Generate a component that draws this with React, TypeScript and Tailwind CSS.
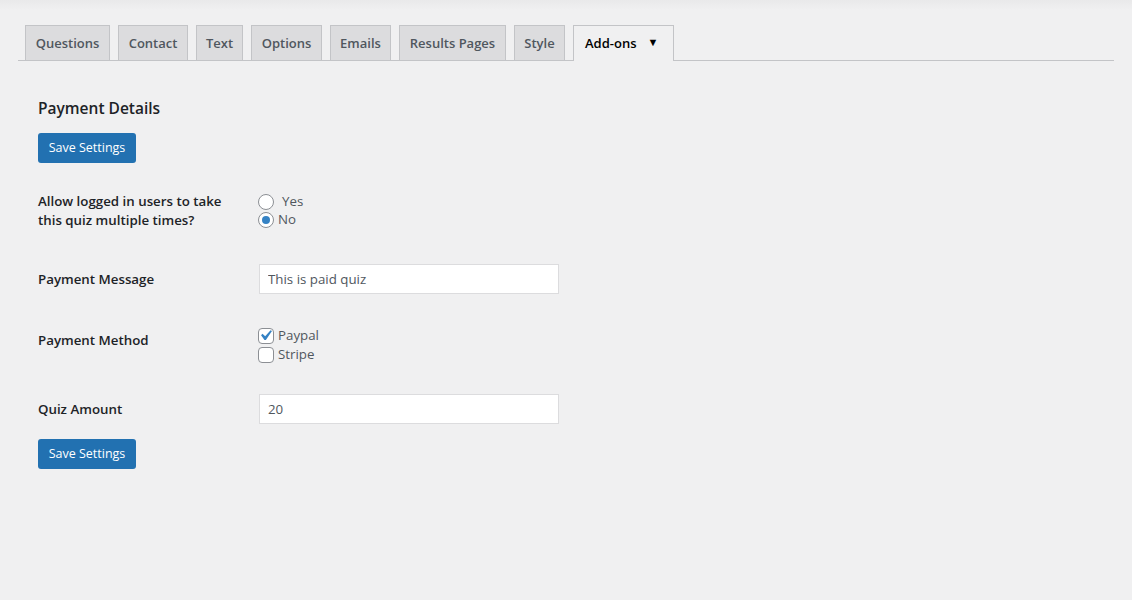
import { useState } from "react";

const tabs = [
  { label: "Questions", w: "w-[85px]" },
  { label: "Contact", w: "w-[70px]" },
  { label: "Text", w: "w-[47px]" },
  { label: "Options", w: "w-[71px]" },
  { label: "Emails", w: "w-[61px]" },
  { label: "Results Pages", w: "w-[107px]" },
  { label: "Style", w: "w-[51px]" },
];

function Radio({ checked, label, onClick }: { checked: boolean; label: string; onClick: () => void }) {
  return (
    <label onClick={onClick} className="flex items-center h-[18px] cursor-pointer">
      <span className="w-4 h-4 rounded-full border border-[#8c8f94] bg-white flex items-center justify-center">
        {checked && <span className="w-2 h-2 rounded-full bg-[#3582c4]" />}
      </span>
      <span className={checked ? "ml-[4px] text-[#50575e]" : "ml-[8px] text-[#50575e]"}>{label}</span>
    </label>
  );
}

function Check({ checked, label, onClick }: { checked: boolean; label: string; onClick: () => void }) {
  return (
    <label onClick={onClick} className="flex items-center h-[19px] cursor-pointer">
      <span className="relative w-4 h-4 rounded-[4px] border border-[#8c8f94] bg-white">
        {checked && (
          <svg viewBox="0 0 20 20" className="absolute w-[21px] h-[21px] -top-[4px] -left-[4px]">
            <path d="M14.83 4.89l1.34.94-5.81 8.38H9.02L5.78 9.67l1.34-1.25 2.57 2.4z" fill="#3582c4" />
          </svg>
        )}
      </span>
      <span className="ml-[4px] text-[#50575e]">{label}</span>
    </label>
  );
}

export default function App() {
  const [multi, setMulti] = useState(false);
  const [paypal, setPaypal] = useState(true);
  const [stripe, setStripe] = useState(false);
  const [message, setMessage] = useState("This is paid quiz");
  const [amount, setAmount] = useState("20");

  return (
    <div className="min-h-[600px] w-[1132px] bg-[#f0f0f1] bg-gradient-to-b from-[#e9e9ea] to-[#f0f0f1] bg-[length:100%_10px] bg-no-repeat text-[13px] text-[#1d2327] font-['Segoe_UI','Open_Sans',sans-serif]">
      {/* tabs */}
      <div className="pt-[25px] mx-[18px] border-b border-[#c3c4c7] flex pl-[7px] gap-2">
        {tabs.map((t) => (
          <div
            key={t.label}
            className={`${t.w} h-[35px] pt-[2px] -mb-px border border-b-0 border-[#c3c4c7] bg-[#dcdcde] text-[13px] font-semibold text-[#50575e] flex items-center justify-center`}
          >
            {t.label}
          </div>
        ))}
        <div className="w-[101px] h-[36px] pt-[1px] -mb-px border border-b-0 border-[#c3c4c7] bg-[#f0f0f1] text-[13px] font-semibold text-black flex items-center pl-[11px] gap-[11px]">
          Add-ons
          <span className="text-[11px] leading-none -mt-[5px]">▼</span>
        </div>
      </div>

      <div className="pl-[38px]">
        <h2 className="mt-[36px] text-[15.5px] leading-[22px] font-semibold text-[#1d2327]">Payment Details</h2>
        <button className="mt-[14px] h-[30px] w-[98px] pt-px rounded-[3px] bg-[#2271b1] text-white text-[12.5px]">Save Settings</button>

        {/* row: multiple times */}
        <div className="mt-[29px] flex">
          <div className="w-[220px] text-[13.3px] font-semibold leading-[19px]">
            Allow logged in users to take
            <br />
            this quiz multiple times?
          </div>
          <div className="flex flex-col text-[13.3px] pt-[1px]">
            <Radio checked={multi} label="Yes" onClick={() => setMulti(true)} />
            <Radio checked={!multi} label="No" onClick={() => setMulti(false)} />
          </div>
        </div>

        {/* row: payment message */}
        <div className="mt-[34px] flex">
          <div className="w-[221px] text-[13.3px] leading-[19px] font-semibold pt-[6px]">Payment Message</div>
          <input
            value={message}
            onChange={(e) => setMessage(e.target.value)}
            className="w-[300px] h-[30px] px-[8px] bg-white border border-[#dcdcde] text-[13.3px] text-[#50575e] outline-none"
          />
        </div>

        {/* row: payment method */}
        <div className="mt-[32px] flex">
          <div className="w-[220px] text-[13.3px] leading-[19px] font-semibold pt-[5px]">Payment Method</div>
          <div className="flex flex-col text-[13.3px]">
            <Check checked={paypal} label="Paypal" onClick={() => setPaypal(!paypal)} />
            <Check checked={stripe} label="Stripe" onClick={() => setStripe(!stripe)} />
          </div>
        </div>

        {/* row: quiz amount */}
        <div className="mt-[30px] flex">
          <div className="w-[221px] text-[13.3px] leading-[19px] font-semibold pt-[6px]">Quiz Amount</div>
          <input
            value={amount}
            onChange={(e) => setAmount(e.target.value)}
            className="w-[300px] h-[30px] px-[8px] bg-white border border-[#dcdcde] text-[13.3px] text-[#50575e] outline-none"
          />
        </div>

        <button className="mt-[15px] h-[30px] w-[98px] pt-px rounded-[3px] bg-[#2271b1] text-white text-[12.5px]">Save Settings</button>
      </div>
    </div>
  );
}
